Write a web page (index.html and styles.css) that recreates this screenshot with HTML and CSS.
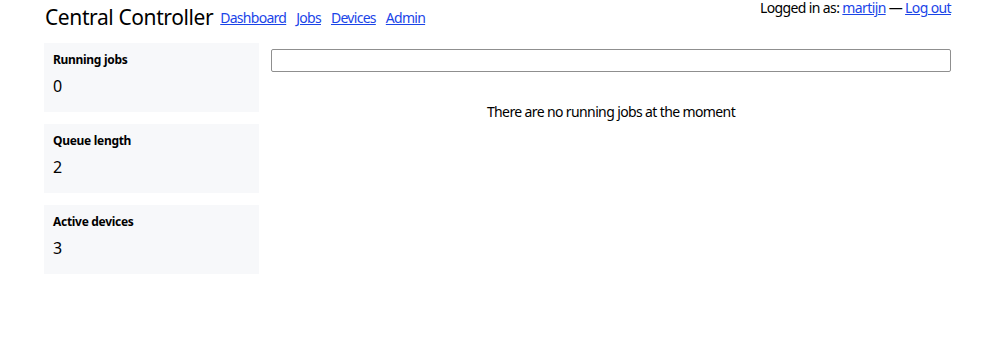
FILE: index.html
```html
<!DOCTYPE html>
<html>
<head>
<meta charset="utf-8">
<link rel="stylesheet" href="styles.css">
</head>
<body>
<div class="page">
  <header class="header">
    <div class="brand">
      <span class="title">Central Controller</span>
      <nav class="nav">
        <a href="#">Dashboard</a>
        <a href="#">Jobs</a>
        <a href="#">Devices</a>
        <a href="#">Admin</a>
      </nav>
    </div>
    <div class="user">Logged in as: <a href="#">martijn</a> — <a href="#">Log out</a></div>
  </header>
  <div class="layout">
    <aside class="sidebar">
      <div class="card">
        <div class="card-label">Running jobs</div>
        <div class="card-value">0</div>
      </div>
      <div class="card">
        <div class="card-label">Queue length</div>
        <div class="card-value">2</div>
      </div>
      <div class="card">
        <div class="card-label">Active devices</div>
        <div class="card-value">3</div>
      </div>
    </aside>
    <main class="main">
      <input class="search" type="text">
      <p class="empty">There are no running jobs at the moment</p>
    </main>
  </div>
</div>
</body>
</html>
```
FILE: styles.css
```css
html, body {
  margin: 0;
  padding: 0;
  background: #fff;
}
body {
  font-family: "Noto Sans", "Open Sans", sans-serif;
  color: #000;
  font-size: 14px;
  letter-spacing: -0.62px;
}
.page {
  padding: 0 49px 0 44px;
}
.header {
  display: flex;
  justify-content: space-between;
  align-items: flex-start;
}
.brand {
  display: flex;
  align-items: center;
  padding-top: 3px;
}
.title {
  font-size: 21px;
  letter-spacing: -0.4px;
  margin-left: 1px;
  margin-right: 7px;
}
.nav {
  display: flex;
  gap: 10px;
  font-size: 14px;
  letter-spacing: -0.72px;
}
a {
  color: #1a44e8;
  text-decoration: underline;
}
.user {
  font-size: 14px;
  line-height: 16px;
}
.layout {
  display: flex;
  gap: 12px;
  margin-top: 12px;
}
.sidebar {
  width: 215px;
  flex: none;
  display: flex;
  flex-direction: column;
  gap: 12px;
}
.card {
  background: #f7f8fa;
  height: 69px;
  box-sizing: border-box;
  padding: 9px 9px 8px;
}
.card-label {
  font-size: 12px;
  letter-spacing: -0.3px;
  font-weight: bold;
  line-height: 16px;
}
.card-value {
  font-size: 16px;
  letter-spacing: 0;
  line-height: 22px;
  margin-top: 7px;
}
.main {
  flex: 1;
  padding-top: 6px;
}
.search {
  display: block;
  width: 100%;
  box-sizing: border-box;
  height: 23px;
  border: 1px solid #8f8f8f;
  border-radius: 2px;
  margin: 0;
  padding: 0 4px;
}
.empty {
  text-align: center;
  margin: 30px 0 0;
  font-size: 14px;
  line-height: 20px;
}
```
